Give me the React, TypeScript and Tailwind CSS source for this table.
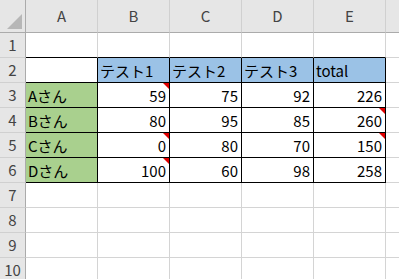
import React from "react";

type Cell = { v?: string; num?: boolean; note?: boolean };

const COLS = ["A", "B", "C", "D", "E", ""];

// sheet content, keyed by row number; columns A..E
const DATA: Record<number, Cell[]> = {
  2: [{}, { v: "テスト1" }, { v: "テスト2" }, { v: "テスト3" }, { v: "total" }],
  3: [{ v: "Aさん" }, { v: "59", num: true, note: true }, { v: "75", num: true }, { v: "92", num: true }, { v: "226", num: true }],
  4: [{ v: "Bさん" }, { v: "80", num: true }, { v: "95", num: true }, { v: "85", num: true }, { v: "260", num: true, note: true }],
  5: [{ v: "Cさん" }, { v: "0", num: true, note: true }, { v: "80", num: true }, { v: "70", num: true }, { v: "150", num: true, note: true }],
  6: [{ v: "Dさん" }, { v: "100", num: true, note: true }, { v: "60", num: true }, { v: "98", num: true }, { v: "258", num: true }],
};

const inTable = (r: number, c: number) => r >= 2 && r <= 6 && c >= 0 && c <= 4;

function SheetCell({ r, c }: { r: number; c: number }) {
  const cell = DATA[r]?.[c] ?? {};
  const right = inTable(r, c) || inTable(r, c + 1);
  const bottom = inTable(r, c) || inTable(r + 1, c);
  let bg = "bg-white";
  if (r === 2 && c >= 1 && c <= 4) bg = "bg-[#9bc2e6]";
  if (r >= 3 && r <= 6 && c === 0) bg = "bg-[#a9d08e]";

  return (
    <div
      className={`relative flex items-end pb-[1px] border-r border-b text-[15px] leading-[20px] text-black whitespace-nowrap overflow-hidden ${bg} ${
        right ? "border-r-black" : "border-r-[#d4d4d4]"
      } ${bottom ? "border-b-black" : "border-b-[#d4d4d4]"} ${cell.num ? "justify-end pr-[3px]" : "pl-[2px]"}`}
    >
      {cell.v}
      {cell.note && (
        <span className="absolute top-0 right-0 w-0 h-0 border-t-[6px] border-l-[6px] border-t-[#e00000] border-l-transparent" />
      )}
    </div>
  );
}

export default function App() {
  const rows = Array.from({ length: 10 }, (_, i) => i + 1);
  return (
    <div
      className="w-[399px] h-[279px] overflow-hidden bg-white"
      style={{ fontFamily: '"Noto Sans CJK JP", "Noto Sans", sans-serif' }}
    >
      <div className="grid grid-cols-[26px_72px_72px_72px_72px_72px_72px] grid-rows-[33px_repeat(10,25px)]">
        {/* corner */}
        <div className="relative bg-[#e6e6e6] border-r border-b border-[#ababab]">
          <span className="absolute right-[3px] bottom-[3px] w-0 h-0 border-b-[15px] border-l-[15px] border-b-[#b7b7b7] border-l-transparent" />
        </div>
        {COLS.map((col, i) => (
          <div
            key={i}
            className="flex items-center justify-center bg-[#e6e6e6] border-r border-b border-r-[#d0d0d0] border-b-[#ababab] text-[15px] text-[#444]"
          >
            {col}
          </div>
        ))}
        {rows.map((r) => (
          <React.Fragment key={r}>
            <div className="flex items-center justify-center bg-[#e6e6e6] border-r border-b border-r-[#ababab] border-b-[#d0d0d0] text-[15px] text-[#444]">
              {r}
            </div>
            {COLS.map((_, c) => (
              <SheetCell key={c} r={r} c={c} />
            ))}
          </React.Fragment>
        ))}
      </div>
    </div>
  );
}
